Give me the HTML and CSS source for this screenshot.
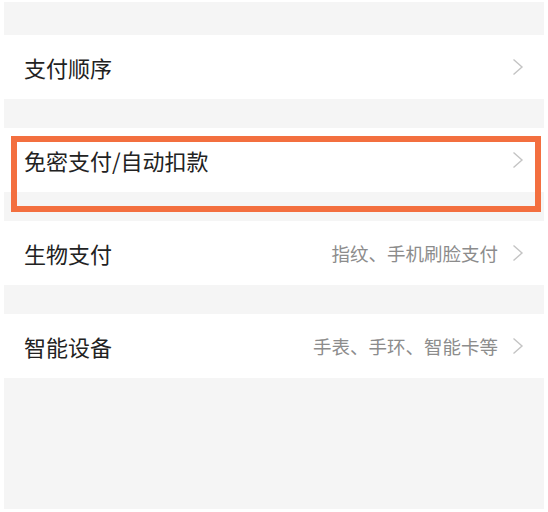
FILE: index.html
```html
<!DOCTYPE html>
<html lang="zh-CN">
<head>
    <meta charset="UTF-8">
    <meta name="viewport" content="width=device-width, initial-scale=1.0">
    <title>支付设置</title>
    <link rel="stylesheet" href="styles.css">
</head>
<body>
    <div class="page">
        <div class="row">
            <span class="label">支付顺序</span>
            <span class="chevron"><svg width="12" height="18" viewBox="0 0 12 18"><path d="M1.5 1.5 L10 9 L1.5 16.5" fill="none" stroke="#c4c4c4" stroke-width="1.4"/></svg></span>
        </div>

        <div class="row row-marked">
            <span class="label">免密支付/自动扣款</span>
            <span class="chevron"><svg width="12" height="18" viewBox="0 0 12 18"><path d="M1.5 1.5 L10 9 L1.5 16.5" fill="none" stroke="#c4c4c4" stroke-width="1.4"/></svg></span>
            <div class="highlight"></div>
        </div>

        <div class="row">
            <span class="label">生物支付</span>
            <span class="hint">指纹、手机刷脸支付</span>
            <span class="chevron"><svg width="12" height="18" viewBox="0 0 12 18"><path d="M1.5 1.5 L10 9 L1.5 16.5" fill="none" stroke="#c4c4c4" stroke-width="1.4"/></svg></span>
        </div>

        <div class="row">
            <span class="label">智能设备</span>
            <span class="hint">手表、手环、智能卡等</span>
            <span class="chevron"><svg width="12" height="18" viewBox="0 0 12 18"><path d="M1.5 1.5 L10 9 L1.5 16.5" fill="none" stroke="#c4c4c4" stroke-width="1.4"/></svg></span>
        </div>
    </div>
</body>
</html>
```

FILE: styles.css
```css
html, body {
    margin: 0;
    padding: 0;
    background-color: white;
}

body {
    font-family: "Noto Sans CJK SC", "Noto Sans", sans-serif;
    padding: 2px 4px 3px;
}

.page {
    background-color: #f5f5f5;
    height: 507px;
    padding-top: 33px;
    box-sizing: border-box;
    display: flex;
    flex-direction: column;
    gap: 29px;
}

.row {
    position: relative;
    height: 64px;
    background-color: white;
    display: flex;
    align-items: center;
    padding: 0 20px 0 20px;
}

.label {
    flex: 1;
    font-size: 22px;
    color: #222;
}

.hint {
    font-size: 18.5px;
    color: #8c8c8c;
    margin-right: 14px;
}

.chevron {
    display: flex;
    align-items: center;
}

.highlight {
    position: absolute;
    top: 8px;
    left: 7px;
    right: 3px;
    height: 76px;
    border: 6px solid #f36f3f;
    box-sizing: border-box;
}
```
